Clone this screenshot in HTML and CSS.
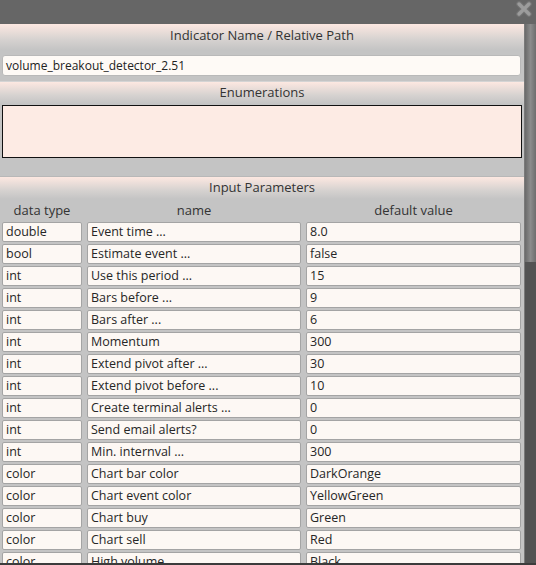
FILE: index.html
```html
<!DOCTYPE html>
<html lang="en">
<head>
  <meta charset="UTF-8" />
  <title>Indicator Settings</title>
  <link rel="stylesheet" href="styles.css">
</head>
<body>
  <div class="titlebar">
    <svg class="close" width="18" height="16" viewBox="0 0 18 16">
      <path d="M4 3 L14 13 M14 3 L4 13" stroke="#747474" stroke-width="5.6" stroke-linecap="round"/>
      <path d="M4 3 L14 13 M14 3 L4 13" stroke="#9c9c9c" stroke-width="3.4" stroke-linecap="round"/>
    </svg>
  </div>

  <div class="main">
    <div class="panel">
      <div class="section-head head-name">Indicator Name / Relative Path</div>
      <div class="name-row">
        <div class="field">volume_breakout_detector_2.51</div>
      </div>

      <div class="section-head head-enum">Enumerations</div>
      <div class="enum-box"></div>

      <div class="section-head head-params">Input Parameters</div>
      <div class="params">
        <div class="col-head">data type</div>
        <div class="col-head">name</div>
        <div class="col-head">default value</div>
      </div>
      <div class="params rows" id="rows"></div>
    </div>
    <div class="scrollbar"><div class="thumb"></div></div>
  </div>
  <div class="bottom"></div>

  <script>
    var params = [
      ['double', 'Event time ...', '8.0'],
      ['bool', 'Estimate event ...', 'false'],
      ['int', 'Use this period ...', '15'],
      ['int', 'Bars before ...', '9'],
      ['int', 'Bars after ...', '6'],
      ['int', 'Momentum', '300'],
      ['int', 'Extend pivot after ...', '30'],
      ['int', 'Extend pivot before ...', '10'],
      ['int', 'Create terminal alerts ...', '0'],
      ['int', 'Send email alerts?', '0'],
      ['int', 'Min. internval ...', '300'],
      ['color', 'Chart bar color', 'DarkOrange'],
      ['color', 'Chart event color', 'YellowGreen'],
      ['color', 'Chart buy', 'Green'],
      ['color', 'Chart sell', 'Red'],
      ['color', 'High volume', 'Black']
    ];

    var rows = document.getElementById('rows');
    params.forEach(function(p) {
      p.forEach(function(v) {
        var cell = document.createElement('div');
        cell.className = 'cell';
        cell.textContent = v;
        rows.appendChild(cell);
      });
    });
  </script>
</body>
</html>
```

FILE: styles.css
```css
* {
  box-sizing: border-box;
  margin: 0;
  padding: 0;
}

body {
  background: #666;
  font-family: 'Open Sans', 'Noto Sans', sans-serif;
  font-size: 13px;
  color: #333;
  width: 536px;
  height: 565px;
  overflow: hidden;
}

.titlebar {
  height: 24px;
  background: #666;
  position: relative;
}

.titlebar .close {
  position: absolute;
  right: 3px;
  top: 1px;
}

.main {
  display: flex;
  height: 539px;
}

.panel {
  width: 524px;
  background: #c4c4c4;
  overflow: hidden;
}

.section-head {
  text-align: center;
  color: #333;
  background: linear-gradient(to bottom, #fde8e1 0%, #d6d2d0 60%, #c4c4c4 100%);
}

.head-name {
  height: 26px;
  line-height: 23px;
}

.name-row {
  height: 32px;
  padding: 5px 3px 0 2px;
  border-bottom: 1px solid #d4d4d4;
}

.field {
  height: 21px;
  line-height: 19px;
  padding-left: 3px;
  background: #fefaf6;
  border: 1px solid #b9b9b9;
  border-radius: 3px;
  color: #222;
  font-size: 12px;
}

.head-enum {
  height: 22px;
  line-height: 20px;
}

.enum-box {
  height: 53px;
  margin: 1px 2px 18px 2px;
  background: #fdebe4;
  border: 1px solid #111;
}

.head-params {
  height: 23px;
  line-height: 21px;
  border-top: 1px solid #b8b8b8;
}

.params {
  display: grid;
  grid-template-columns: 80px 214px 215px;
  column-gap: 5px;
  padding-left: 2px;
}

.col-head {
  height: 22px;
  line-height: 22px;
  text-align: center;
}

.rows {
  row-gap: 2px;
  padding-top: 1px;
}

.cell {
  height: 20px;
  line-height: 17px;
  padding-left: 3px;
  background: #fdf8f4;
  border: 1px solid #a4a4a4;
  border-radius: 2px;
  color: #262626;
  font-size: 12.5px;
  white-space: nowrap;
  overflow: hidden;
}

.scrollbar {
  width: 12px;
  background: #535353;
  border-left: 1px solid #7a7a7a;
}

.thumb {
  height: 238px;
  background: linear-gradient(to right, #6a6a6a, #8c8c8c 50%, #6e6e6e);
}

.bottom {
  height: 2px;
  background: #3c3c3c;
}
```
